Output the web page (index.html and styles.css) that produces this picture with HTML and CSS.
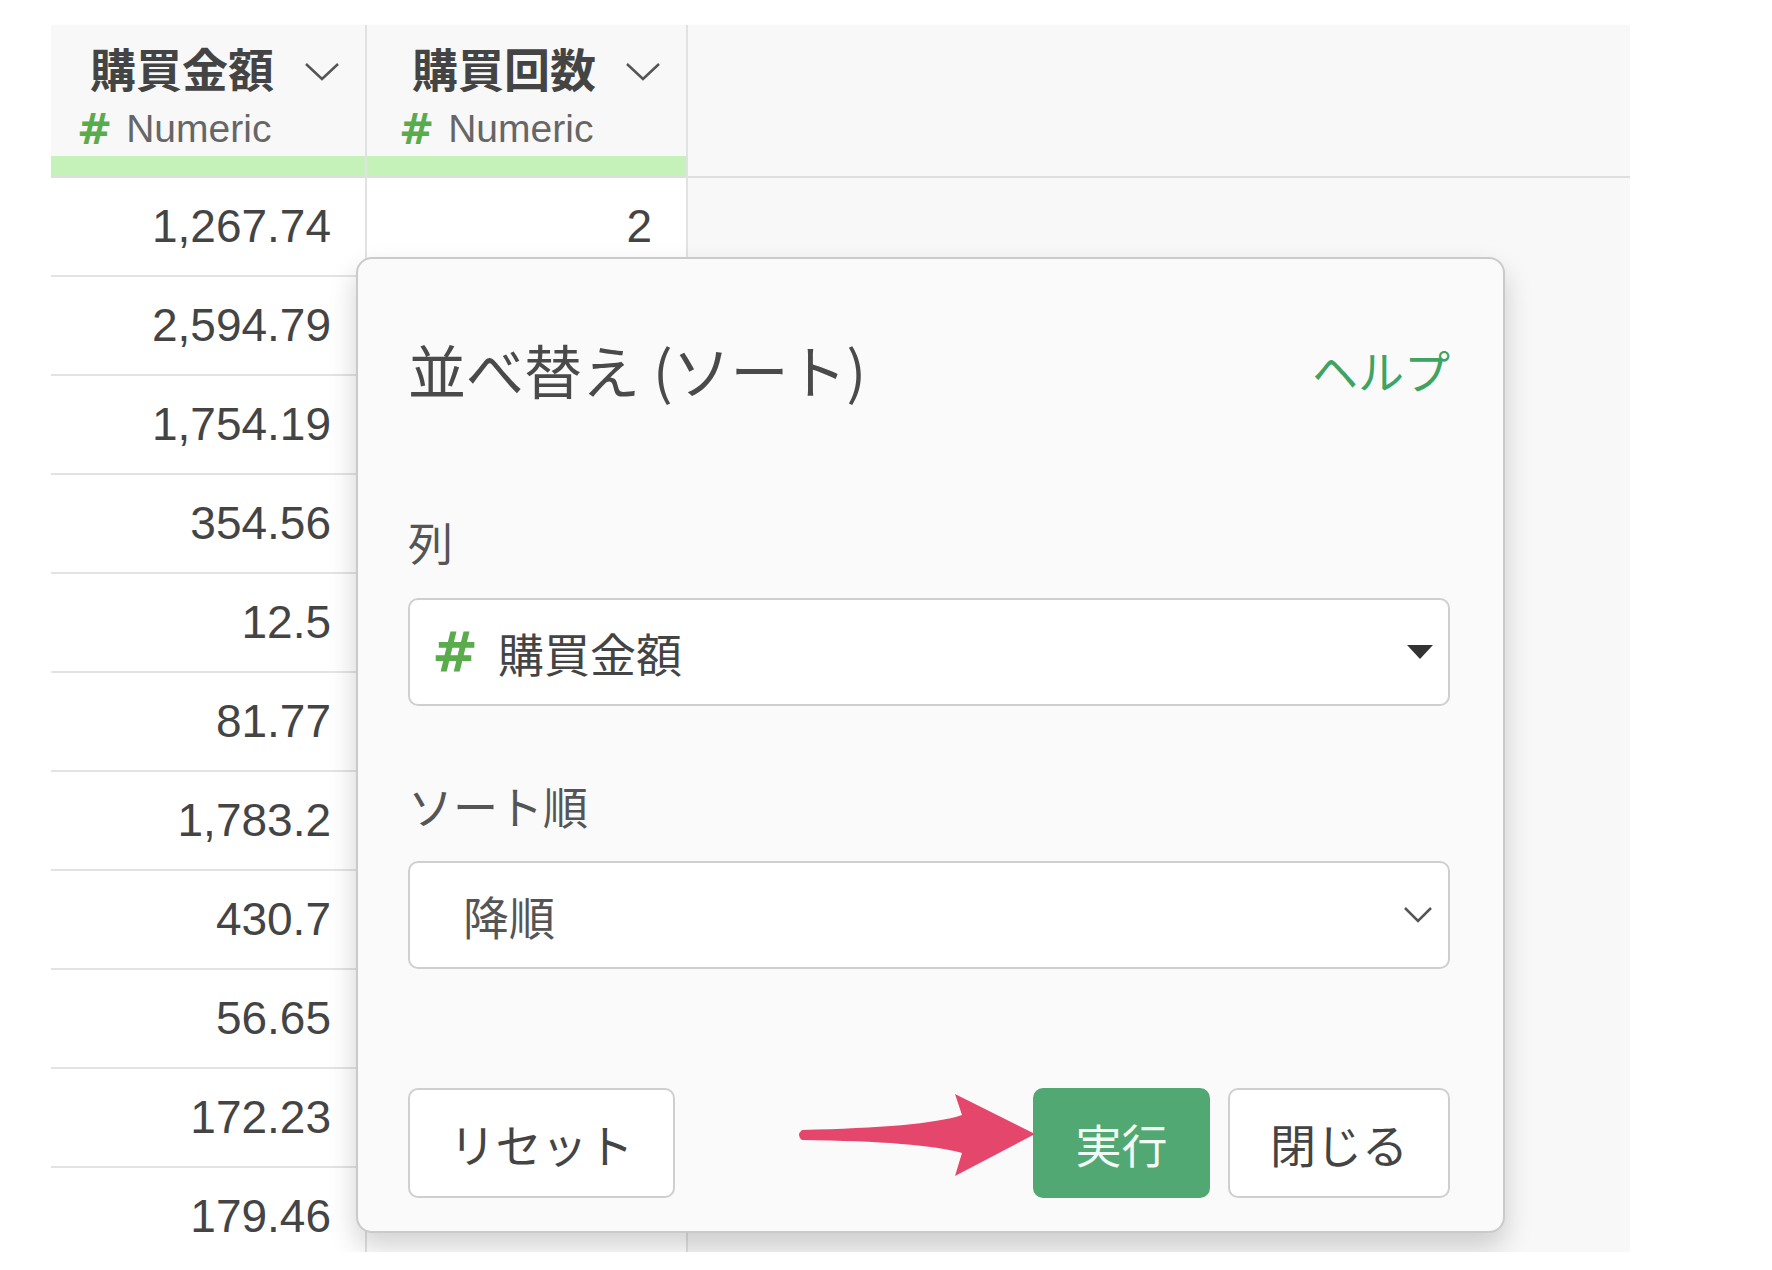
FILE: index.html
```html
<!DOCTYPE html>
<html>
<head>
    <title>並べ替え (ソート)</title>
    <link rel="stylesheet" href="styles.css">
</head>
<body>

<div class="sheet">
    <div class="grid">
        <!-- 購買金額 column -->
        <div class="col col-amount">
            <div class="col-head">
                <div class="col-title">
                    <span>購買金額</span>
                    <svg class="chev" width="36" height="20" viewBox="0 0 36 20"><polyline points="2,2 18,17 34,2" /></svg>
                </div>
                <div class="col-type"><span class="hash">#</span>Numeric</div>
            </div>
            <div class="col-bar"></div>
            <div class="cell">1,267.74</div>
            <div class="cell">2,594.79</div>
            <div class="cell">1,754.19</div>
            <div class="cell">354.56</div>
            <div class="cell">12.5</div>
            <div class="cell">81.77</div>
            <div class="cell">1,783.2</div>
            <div class="cell">430.7</div>
            <div class="cell">56.65</div>
            <div class="cell">172.23</div>
            <div class="cell">179.46</div>
        </div>

        <!-- 購買回数 column -->
        <div class="col col-count">
            <div class="col-head">
                <div class="col-title">
                    <span>購買回数</span>
                    <svg class="chev" width="36" height="20" viewBox="0 0 36 20"><polyline points="2,2 18,17 34,2" /></svg>
                </div>
                <div class="col-type"><span class="hash">#</span>Numeric</div>
            </div>
            <div class="col-bar"></div>
            <div class="cell">2</div>
            <div class="cell"></div>
            <div class="cell"></div>
            <div class="cell"></div>
            <div class="cell"></div>
            <div class="cell"></div>
            <div class="cell"></div>
            <div class="cell"></div>
            <div class="cell"></div>
            <div class="cell"></div>
            <div class="cell"></div>
        </div>

        <div class="col-rest">
            <div class="rest-head"></div>
        </div>
    </div>

    <!-- Sort dialog -->
    <div class="dialog">
        <div class="dialog-head">
            <div class="dialog-title">並べ替え (ソート)</div>
            <a class="help">ヘルプ</a>
        </div>

        <div class="label">列</div>
        <div class="select">
            <span class="hash">#</span>
            <span class="value">購買金額</span>
            <svg width="26" height="14" viewBox="0 0 26 14"><polygon points="0,0 26,0 13,14" fill="#333" /></svg>
        </div>

        <div class="label label-order">ソート順</div>
        <div class="select select-order">
            <span class="value">降順</span>
            <svg class="chev" width="30" height="18" viewBox="0 0 30 18"><polyline points="2,2 15,15 28,2" /></svg>
        </div>

        <div class="actions">
            <button class="btn btn-reset">リセット</button>
            <button class="btn btn-run">実行</button>
            <button class="btn btn-close">閉じる</button>
        </div>

        <svg class="arrow" width="245" height="90" viewBox="795 1090 245 90">
            <path d="M802,1130 C880,1128 935,1124 962,1115 L955,1094 L1035,1134 L955,1176 L962,1153 C935,1145 880,1141 802,1140 Q796,1135 802,1130 Z" fill="#e5466c" />
        </svg>
    </div>
</div>

</body>
</html>
```

FILE: styles.css
```css
body {
    margin: 0;
    background-color: #fff;
    font-family: "Liberation Sans", "Noto Sans CJK JP", sans-serif;
    color: #444;
}

.sheet {
    position: relative;
    margin: 25px 0 0 51px;
    width: 1579px;
    height: 1227px;
    background-color: #f8f8f8;
    overflow: hidden;
}

.grid {
    display: flex;
    height: 100%;
}

.col {
    display: flex;
    flex-direction: column;
    box-sizing: border-box;
    border-right: 2px solid #e2e2e2;
}

.col > div {
    flex-shrink: 0;
}

.col-amount {
    width: 316px;
}

.col-count {
    width: 321px;
}

.col-rest {
    flex: 1;
}

/* column header */
.col-head {
    height: 131px;
    box-sizing: border-box;
    padding-top: 14px;
}

.col-title {
    display: flex;
    align-items: center;
    justify-content: space-between;
    height: 56px;
    padding: 0 25px 0 39px;
    font-family: "Noto Sans CJK JP", sans-serif;
    font-weight: bold;
    font-size: 46px;
    color: #444;
}

.col-title .chev {
    margin-top: 10px;
}

.col-count .col-title {
    padding-left: 45px;
}

.chev polyline {
    fill: none;
    stroke: #555;
    stroke-width: 2.5;
}

.col-type {
    display: flex;
    align-items: center;
    height: 44px;
    margin-top: 12px;
    padding-left: 26px;
    font-size: 39px;
    color: #666;
}

.col-count .col-type {
    padding-left: 32px;
}

.hash {
    font-family: "DejaVu Sans", sans-serif;
    font-weight: bold;
    color: #5aab4c;
}

.col-type .hash {
    font-size: 42px;
    margin-right: 14px;
}

.col-bar {
    height: 20px;
    background-color: #c4f2b8;
    border-bottom: 2px solid #dedede;
}

.rest-head {
    height: 151px;
    border-bottom: 2px solid #dedede;
}

.cell {
    height: 99px;
    box-sizing: border-box;
    padding-right: 34px;
    border-bottom: 2px solid #e3e3e3;
    background-color: #fff;
    text-align: right;
    line-height: 97px;
    font-size: 46px;
    color: #444;
}

/* dialog */
.dialog {
    position: absolute;
    left: 305px;
    top: 232px;
    width: 1149px;
    height: 976px;
    box-sizing: border-box;
    padding: 78px 53px 33px 50px;
    background-color: #fafafa;
    border: 2px solid #cacaca;
    border-radius: 16px;
    box-shadow: 0 14px 28px rgba(0, 0, 0, 0.18);
    font-family: "Noto Sans CJK JP", sans-serif;
}

.dialog-head {
    display: flex;
    align-items: center;
    justify-content: space-between;
    height: 64px;
}

.dialog-title {
    font-size: 58px;
    line-height: 64px;
    color: #4a4a4a;
}

.help {
    font-size: 46px;
    color: #3fa364;
    cursor: pointer;
}

.label {
    margin-top: 116px;
    font-size: 45px;
    line-height: 50px;
    color: #555;
}

.label-order {
    margin-top: 75px;
}

.select {
    display: flex;
    align-items: center;
    height: 108px;
    box-sizing: border-box;
    margin-top: 31px;
    padding: 0 15px 0 22px;
    background-color: #fff;
    border: 2px solid #cfcfcf;
    border-radius: 10px;
}

.select-order {
    margin-top: 30px;
}

.select .hash {
    font-size: 55px;
    margin-right: 20px;
}

.select .value {
    flex: 1;
    font-size: 46px;
    color: #444;
}

.select-order .value {
    padding-left: 31px;
    color: #555;
}

.actions {
    display: flex;
    gap: 18px;
    margin-top: 119px;
}

.btn {
    height: 110px;
    box-sizing: border-box;
    background-color: #fff;
    border: 2px solid #cfcfcf;
    border-radius: 10px;
    font-family: "Noto Sans CJK JP", sans-serif;
    font-size: 46px;
    color: #444;
    cursor: pointer;
}

.btn-reset {
    width: 267px;
    margin-right: auto;
}

.btn-run {
    width: 177px;
    background-color: #51a873;
    border-color: #51a873;
    color: #f2faf5;
}

.btn-close {
    width: 222px;
}

.arrow {
    position: absolute;
    left: 437px;
    top: 831px;
}
```
